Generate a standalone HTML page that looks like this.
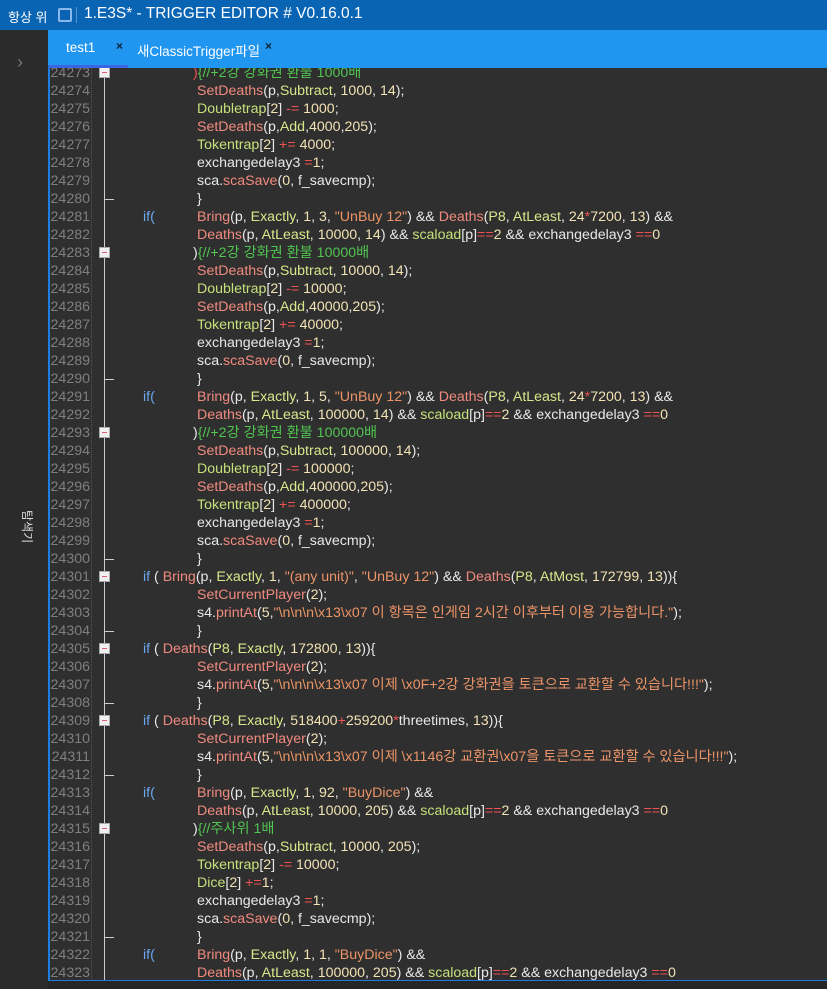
<!DOCTYPE html>
<html><head><meta charset="utf-8"><style>
*{margin:0;padding:0;box-sizing:border-box}
body{width:827px;height:989px;background:#252526;overflow:hidden;position:relative;font-family:"Liberation Sans","Noto Sans CJK KR",sans-serif}
#title{position:absolute;left:0;top:0;width:827px;height:30px;background:#0a64b4;color:#fff;font-size:14px}
#side{position:absolute;left:0;top:30px;width:48px;height:959px;background:#2b2b2b}
#tabs{position:absolute;left:48px;top:30px;width:779px;height:38px;background:#2196f0;z-index:3;color:#fff;font-size:13.5px}
#ed{position:absolute;left:48px;top:68px;width:779px;height:913px;background:#2f2f2f;border-left:2px solid #1e7ee0;border-bottom:1px solid #1e7ee0;overflow:hidden}
.l{position:absolute;left:0;height:18px;line-height:18px;font-size:14.2px;white-space:pre;color:#e8e8e8;width:779px}
.n{position:absolute;left:-2px;width:42px;text-align:right;color:#7f7f7f}
.c{position:absolute}
.f{color:#f08a7e}.i{color:#d6e88c}.s{color:#ec9468}.o{color:#f05252}.m{color:#50c450}.k{color:#6aa8f0}.v{color:#c6e07a}.d{color:#f2e2b4}
.box{position:absolute;left:49px;width:11px;height:11px;background:#f0f0f0;border:1px solid #aaa}
.box:after{content:"";position:absolute;left:2px;top:4px;width:5px;height:1px;background:#e06070}
.tk{position:absolute;left:54px;width:10px;height:1px;background:#ccc}
</style></head><body>
<div id="title"><span style="position:absolute;left:8px;top:7px;font-size:13px">항상 위</span><span style="position:absolute;left:58px;top:8px;width:14px;height:14px;border:2px solid #8ab8e8;border-radius:2px"></span><span style="position:absolute;left:76px;top:7px;width:1px;height:16px;background:#5a90c8"></span><span style="position:absolute;left:84px;top:5px;font-size:15.5px">1.E3S* - TRIGGER EDITOR # V0.16.0.1</span></div>
<div id="side"><span style="position:absolute;left:17px;top:22px;color:#777;font-size:18px">›</span><span style="position:absolute;left:19px;top:480px;color:#ddd;font-size:12px;writing-mode:vertical-rl;text-orientation:sideways">탐색기</span></div>
<div id="tabs"><span style="position:absolute;left:18px;top:10px">test1</span><span style="position:absolute;left:68px;top:9px;color:#123;font-weight:bold;font-size:12px">×</span><span style="position:absolute;left:89px;top:10px">새ClassicTrigger파일</span><span style="position:absolute;left:217px;top:9px;color:#123;font-weight:bold;font-size:12px">×</span><span style="position:absolute;left:0;top:35px;width:80px;height:3px;background:#3a66e0"></span></div>
<div id="ed">
<div style="position:absolute;left:41px;top:0;height:913px;border-left:1px dotted #555"></div>
<div style="position:absolute;left:54px;top:0;height:913px;width:1px;background:#ccc"></div>
<div id="code"></div>
</div>
<script>
const L=[
[3,'<span class="o">)</span><span class="m">{//+2강 강화권 환불 1000배</span>',1],
[4,'<span class="f">SetDeaths</span>(p,<span class="i">Subtract</span>, <span class="d">1000</span>, <span class="d">14</span>);'],
[4,'<span class="v">Doubletrap</span>[<span class="d">2</span>] <span class="o">-=</span> <span class="d">1000</span>;'],
[4,'<span class="f">SetDeaths</span>(p,<span class="i">Add</span>,<span class="d">4000</span>,<span class="d">205</span>);'],
[4,'<span class="v">Tokentrap</span>[<span class="d">2</span>] <span class="o">+=</span> <span class="d">4000</span>;'],
[4,'exchangedelay3 <span class="o">=</span><span class="d">1</span>;'],
[4,'sca.<span class="f">scaSave</span>(<span class="d">0</span>, f_savecmp);'],
[4,'}',2],
[1,'IF1|<span class="f">Bring</span>(p, <span class="i">Exactly</span>, <span class="d">1</span>, <span class="d">3</span>, <span class="s">"UnBuy 12"</span>) &amp;&amp; <span class="f">Deaths</span>(<span class="i">P8</span>, <span class="i">AtLeast</span>, <span class="d">24</span><span class="o">*</span><span class="d">7200</span>, <span class="d">13</span>) &amp;&amp;'],
[4,'<span class="f">Deaths</span>(p, <span class="i">AtLeast</span>, <span class="d">10000</span>, <span class="d">14</span>) &amp;&amp; <span class="v">scaload</span>[p]<span class="o">==</span><span class="d">2</span> &amp;&amp; exchangedelay3 <span class="o">==</span><span class="d">0</span>'],
[3,')<span class="m">{//+2강 강화권 환불 10000배</span>',1],
[4,'<span class="f">SetDeaths</span>(p,<span class="i">Subtract</span>, <span class="d">10000</span>, <span class="d">14</span>);'],
[4,'<span class="v">Doubletrap</span>[<span class="d">2</span>] <span class="o">-=</span> <span class="d">10000</span>;'],
[4,'<span class="f">SetDeaths</span>(p,<span class="i">Add</span>,<span class="d">40000</span>,<span class="d">205</span>);'],
[4,'<span class="v">Tokentrap</span>[<span class="d">2</span>] <span class="o">+=</span> <span class="d">40000</span>;'],
[4,'exchangedelay3 <span class="o">=</span><span class="d">1</span>;'],
[4,'sca.<span class="f">scaSave</span>(<span class="d">0</span>, f_savecmp);'],
[4,'}',2],
[1,'IF1|<span class="f">Bring</span>(p, <span class="i">Exactly</span>, <span class="d">1</span>, <span class="d">5</span>, <span class="s">"UnBuy 12"</span>) &amp;&amp; <span class="f">Deaths</span>(<span class="i">P8</span>, <span class="i">AtLeast</span>, <span class="d">24</span><span class="o">*</span><span class="d">7200</span>, <span class="d">13</span>) &amp;&amp;'],
[4,'<span class="f">Deaths</span>(p, <span class="i">AtLeast</span>, <span class="d">100000</span>, <span class="d">14</span>) &amp;&amp; <span class="v">scaload</span>[p]<span class="o">==</span><span class="d">2</span> &amp;&amp; exchangedelay3 <span class="o">==</span><span class="d">0</span>'],
[3,')<span class="m">{//+2강 강화권 환불 100000배</span>',1],
[4,'<span class="f">SetDeaths</span>(p,<span class="i">Subtract</span>, <span class="d">100000</span>, <span class="d">14</span>);'],
[4,'<span class="v">Doubletrap</span>[<span class="d">2</span>] <span class="o">-=</span> <span class="d">100000</span>;'],
[4,'<span class="f">SetDeaths</span>(p,<span class="i">Add</span>,<span class="d">400000</span>,<span class="d">205</span>);'],
[4,'<span class="v">Tokentrap</span>[<span class="d">2</span>] <span class="o">+=</span> <span class="d">400000</span>;'],
[4,'exchangedelay3 <span class="o">=</span><span class="d">1</span>;'],
[4,'sca.<span class="f">scaSave</span>(<span class="d">0</span>, f_savecmp);'],
[4,'}',2],
[1,'<span class="k">if</span> ( <span class="f">Bring</span>(p, <span class="i">Exactly</span>, <span class="d">1</span>, <span class="s">"(any unit)"</span>, <span class="s">"UnBuy 12"</span>) &amp;&amp; <span class="f">Deaths</span>(<span class="i">P8</span>, <span class="i">AtMost</span>, <span class="d">172799</span>, <span class="d">13</span>)){',1],
[4,'<span class="f">SetCurrentPlayer</span>(<span class="d">2</span>);'],
[4,'s4.<span class="f">printAt</span>(<span class="d">5</span>,<span class="s">"\\n\\n\\n\\x13\\x07 이 항목은 인게임 2시간 이후부터 이용 가능합니다."</span>);'],
[4,'}',2],
[1,'<span class="k">if</span> ( <span class="f">Deaths</span>(<span class="i">P8</span>, <span class="i">Exactly</span>, <span class="d">172800</span>, <span class="d">13</span>)){',1],
[4,'<span class="f">SetCurrentPlayer</span>(<span class="d">2</span>);'],
[4,'s4.<span class="f">printAt</span>(<span class="d">5</span>,<span class="s">"\\n\\n\\n\\x13\\x07 이제 \\x0F+2강 강화권을 토큰으로 교환할 수 있습니다!!!"</span>);'],
[4,'}',2],
[1,'<span class="k">if</span> ( <span class="f">Deaths</span>(<span class="i">P8</span>, <span class="i">Exactly</span>, <span class="d">518400</span><span class="o">+</span><span class="d">259200</span><span class="o">*</span>threetimes, <span class="d">13</span>)){',1],
[4,'<span class="f">SetCurrentPlayer</span>(<span class="d">2</span>);'],
[4,'s4.<span class="f">printAt</span>(<span class="d">5</span>,<span class="s">"\\n\\n\\n\\x13\\x07 이제 \\x1146강 교환권\\x07을 토큰으로 교환할 수 있습니다!!!"</span>);'],
[4,'}',2],
[1,'IF1|<span class="f">Bring</span>(p, <span class="i">Exactly</span>, <span class="d">1</span>, <span class="d">92</span>, <span class="s">"BuyDice"</span>) &amp;&amp;'],
[4,'<span class="f">Deaths</span>(p, <span class="i">AtLeast</span>, <span class="d">10000</span>, <span class="d">205</span>) &amp;&amp; <span class="v">scaload</span>[p]<span class="o">==</span><span class="d">2</span> &amp;&amp; exchangedelay3 <span class="o">==</span><span class="d">0</span>'],
[3,')<span class="m">{//주사위 1배</span>',1],
[4,'<span class="f">SetDeaths</span>(p,<span class="i">Subtract</span>, <span class="d">10000</span>, <span class="d">205</span>);'],
[4,'<span class="v">Tokentrap</span>[<span class="d">2</span>] <span class="o">-=</span> <span class="d">10000</span>;'],
[4,'<span class="v">Dice</span>[<span class="d">2</span>] <span class="o">+=</span><span class="d">1</span>;'],
[4,'exchangedelay3 <span class="o">=</span><span class="d">1</span>;'],
[4,'sca.<span class="f">scaSave</span>(<span class="d">0</span>, f_savecmp);'],
[4,'}',2],
[1,'IF1|<span class="f">Bring</span>(p, <span class="i">Exactly</span>, <span class="d">1</span>, <span class="d">1</span>, <span class="s">"BuyDice"</span>) &amp;&amp;'],
[4,'<span class="f">Deaths</span>(p, <span class="i">AtLeast</span>, <span class="d">100000</span>, <span class="d">205</span>) &amp;&amp; <span class="v">scaload</span>[p]<span class="o">==</span><span class="d">2</span> &amp;&amp; exchangedelay3 <span class="o">==</span><span class="d">0</span>']
];
const X={1:93,3:143,4:147};
let h='';
L.forEach((a,i)=>{
 const top=-4+18*i;
 let t=a[1],x=X[a[0]];
 let code;
 if(t.startsWith('IF1|')){code='<span class="c k" style="left:93px">if(</span><span class="c" style="left:147px">'+t.slice(4)+'</span>';}
 else code='<span class="c" style="left:'+x+'px">'+t+'</span>';
 h+='<div class="l" style="top:'+top+'px"><span class="n">'+(24273+i)+'</span>'+code;
 if(a[2]==1)h+='<span class="box" style="top:3px"></span>';
 if(a[2]==2)h+='<span class="tk" style="top:9px"></span>';
 h+='</div>';
});
document.getElementById('code').innerHTML=h;
</script>
</body></html>
